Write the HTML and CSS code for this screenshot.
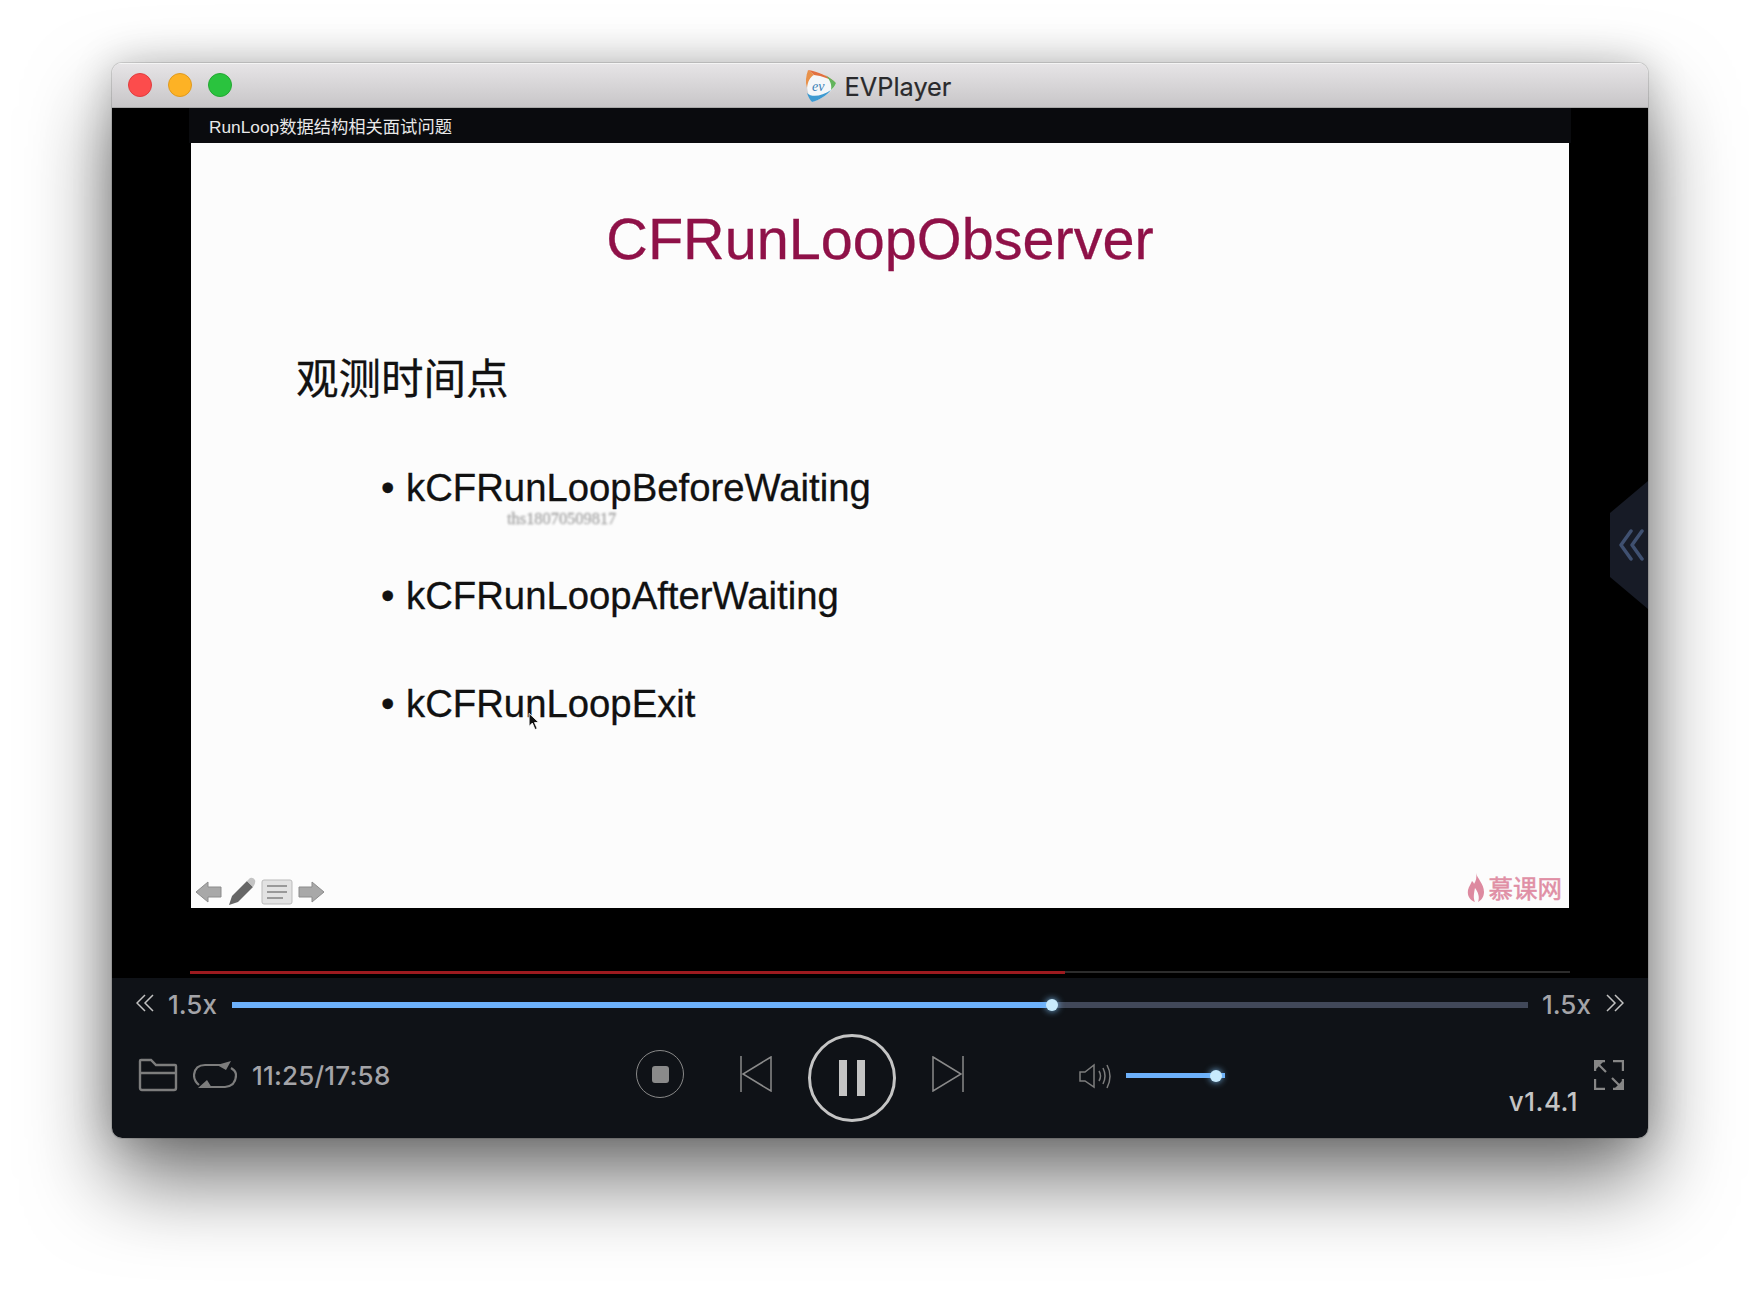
FILE: index.html
```html
<!DOCTYPE html>
<html lang="zh">
<head>
  <meta charset="UTF-8">
  <title>EVPlayer</title>
  <link rel="stylesheet" href="styles.css">
</head>
<body>
  <div class="window">
    <header class="titlebar">
      <div class="lights">
        <span class="light red"></span>
        <span class="light yellow"></span>
        <span class="light green"></span>
      </div>
      <div class="app-name">
        <svg class="app-logo" viewBox="0 0 32 34">
          <path d="M3 1 C11 2 24 7 31 14 C29 21 18 30 7 33 C2 26 0 10 3 1Z" fill="#f4f7f9"/>
          <path d="M3 1 C1 7 0 13 2 19 C3 12 5 8 9 6 C7 4 5 2 3 1Z" fill="#e8914a"/>
          <path d="M3 1 C11 2 24 7 31 14 C26 10 17 7 9 6 C7 4 5 2 3 1Z" fill="#e2703f"/>
          <path d="M20 6 C24 8 28 11 31 14 C30 17 28 19 26 21 C27 16 25 10 20 6Z" fill="#63b45c"/>
          <path d="M2 24 C7 29 17 27 26 21 C21 27 14 31 7 33 C5 31 3 27 2 24Z" fill="#3d9ad1"/>
          <text class="logo-mark" x="7" y="22">ev</text>
        </svg>
        <span>EVPlayer</span>
      </div>
    </header>

    <section class="stage">
      <div class="screen">
        <div class="screen-title">RunLoop数据结构相关面试问题</div>
        <div class="slide">
          <h1 class="slide-heading">CFRunLoopObserver</h1>
          <h2 class="slide-sub">观测时间点</h2>
          <ul class="slide-list">
            <li>kCFRunLoopBeforeWaiting</li>
            <li>kCFRunLoopAfterWaiting</li>
            <li>kCFRunLoopExit</li>
          </ul>
          <span class="watermark">ths18070509817</span>
          <svg class="cursor" viewBox="0 0 12 18">
            <path d="M1 1 L1 13 L4 10 L6.500 16 L8.500 15 L6 9.500 L10 9.500Z" fill="#111" stroke="#fff" stroke-width="0.800"/>
          </svg>
          <div class="slide-tools">
            <svg class="tool" width="28" height="24" viewBox="0 0 28 24">
              <path d="M1 12 L13 2 L13 7 L26 7 L26 17 L13 17 L13 22Z" fill="#a8a8a8" stroke="#8c8c8c"/>
            </svg>
            <svg class="tool" width="30" height="30" viewBox="0 0 30 30">
              <path d="M2 28 L5 19 L20 4 L26 10 L11 25Z" fill="#666"/>
              <path d="M20 4 L23 1 Q26 0 28 3 Q29 6 26 10Z" fill="#c4c4c4"/>
            </svg>
            <svg class="tool" width="32" height="26" viewBox="0 0 32 26">
              <rect x="1" y="1" width="30" height="24" rx="2" fill="#e2e2e2" stroke="#bbb"/>
              <path d="M6 7 H26 M6 13 H26 M6 19 H22" stroke="#999" stroke-width="2"/>
            </svg>
            <svg class="tool" width="28" height="24" viewBox="0 0 28 24">
              <path d="M27 12 L15 2 L15 7 L2 7 L2 17 L15 17 L15 22Z" fill="#a8a8a8" stroke="#8c8c8c"/>
            </svg>
          </div>
          <div class="slide-brand">
            <svg width="18" height="29" viewBox="0 0 18 29">
              <path d="M9 0 C10 5 17 11 17 19 C17 25 13 28 11 29 C13 24 11 19 8 15 C7 20 6 25 8 29 C3 27 0 23 1 17 C2 13 4 11 5 8 C6 9 7 10 7 11 C9 8 10 4 9 0Z" fill="#dd8aa0"/>
            </svg>
            <span>慕课网</span>
          </div>
        </div>
      </div>
      <div class="side-tab">
        <svg width="26" height="32" viewBox="0 0 26 32">
          <path d="M13 2 L3 16 L13 30 M24 2 L14 16 L24 30" fill="none" stroke="#3f5070" stroke-width="3.500" stroke-linecap="round" stroke-linejoin="round"/>
        </svg>
      </div>
      <div class="red-progress"><div class="red-fill"></div></div>
    </section>

    <section class="controls">
      <div class="speed-row">
        <svg class="chev" width="18" height="18" viewBox="0 0 18 18">
          <path d="M9 1 L1 9 L9 17 M17 1 L9 9 L17 17" fill="none" stroke="#c2c2c2" stroke-width="1.500"/>
        </svg>
        <span class="speed-label">1.5x</span>
        <div class="seek">
          <div class="seek-fill"><span class="knob"></span></div>
        </div>
        <span class="speed-label speed-right">1.5x</span>
        <svg class="chev" width="18" height="18" viewBox="0 0 18 18">
          <path d="M1 1 L9 9 L1 17 M9 1 L17 9 L9 17" fill="none" stroke="#c2c2c2" stroke-width="1.500"/>
        </svg>
      </div>

      <div class="button-row">
        <div class="left-group">
          <svg width="40" height="34" viewBox="0 0 40 34">
            <path d="M2 30 V3 Q2 2 3 2 H13 L18 7 H37 Q38 7 38 8 V30 Q38 32 36 32 H4 Q2 32 2 30Z M2 15 H38" fill="none" stroke="#7d7d7d" stroke-width="2.400"/>
          </svg>
          <svg width="44" height="28" viewBox="0 0 44 28">
            <path d="M6 24 Q1 20 1 14 Q2 4 12 4 H28" fill="none" stroke="#7d7d7d" stroke-width="2.200"/>
            <path d="M15 26 H32 Q43 25 43 14 Q43 10 38 7" fill="none" stroke="#7d7d7d" stroke-width="2.200"/>
            <path d="M38 0 L24 4 L33 9Z M5 27 L19 27 L14 19Z" fill="#7d7d7d"/>
          </svg>
          <span class="time">11:25/17:58</span>
        </div>

        <div class="transport">
          <div class="stop-btn"><span class="stop-square"></span></div>
          <svg class="skip-prev" width="32" height="36" viewBox="0 0 32 36">
            <path d="M1 0 V36" stroke="#8a8a8a" stroke-width="1.500"/>
            <path d="M31 1 L3 18 L31 35Z" fill="none" stroke="#8a8a8a" stroke-width="1.500"/>
          </svg>
          <div class="pause-btn"><span class="pause-bar"></span><span class="pause-bar"></span></div>
          <svg class="skip-next" width="32" height="36" viewBox="0 0 32 36">
            <path d="M31 0 V36" stroke="#8a8a8a" stroke-width="1.500"/>
            <path d="M1 1 L29 18 L1 35Z" fill="none" stroke="#8a8a8a" stroke-width="1.500"/>
          </svg>
        </div>

        <div class="volume">
          <svg width="33" height="26" viewBox="0 0 33 26">
            <path d="M1 9 H6 L15 2 V24 L6 18 H1Z" fill="none" stroke="#7d7d7d" stroke-width="1.500"/>
            <path d="M20 8 Q23 13 20 18 M24 5 Q28 13 24 21 M28 2 Q34 13 28 25" fill="none" stroke="#7d7d7d" stroke-width="1.500"/>
          </svg>
          <div class="vol-track"><span class="knob vol-knob"></span></div>
        </div>

        <div class="right-group">
          <span class="version">v1.4.1</span>
          <svg class="fullscreen" width="30" height="30" viewBox="0 0 30 30">
            <path d="M1 11 V1 H11 M19 1 H29 V11 M1 19 V29 H11 M19 29 H29 V19" fill="none" stroke="#868686" stroke-width="2.400"/>
            <path d="M3 3 L12 12 M27 27 L18 18" stroke="#868686" stroke-width="2.200"/>
            <path d="M2 2 H9 L2 9Z M28 28 H21 L28 21Z" fill="#868686"/>
          </svg>
        </div>
      </div>
    </section>
  </div>
</body>
</html>
```

FILE: styles.css
```css
* {
  box-sizing: border-box;
}
body {
  margin: 0;
  padding: 63px 112px 0;
  height: 1298px;
  overflow: hidden;
  background: #fff;
  font-family: 'Inter', 'Noto Sans CJK SC', sans-serif;
}
.window {
  width: 1536px;
  height: 1075px;
  display: flex;
  flex-direction: column;
  border-radius: 10px;
  overflow: hidden;
  box-shadow: 0 0 0 1px rgba(0,0,0,0.12), 0 42px 84px rgba(0,0,0,0.55), 0 0 40px rgba(0,0,0,0.2);
}

/* title bar */
.titlebar {
  height: 45px;
  flex: none;
  position: relative;
  display: flex;
  align-items: center;
  justify-content: center;
  background: linear-gradient(#e6e4e6, #c8c6c8);
  border-top: 1px solid #f4f4f4;
  border-bottom: 1px solid #a8a8a8;
}
.lights {
  position: absolute;
  left: 16px;
  top: 9px;
  display: flex;
  gap: 16px;
}
.light {
  width: 24px;
  height: 24px;
  border-radius: 50%;
}
.red { background: #fc4c4c; border: 1px solid #df3d3f; }
.yellow { background: #fdb225; border: 1px solid #df9a1f; }
.green { background: #2ac33e; border: 1px solid #24a732; }
.app-name {
  display: flex;
  align-items: center;
  gap: 8px;
  padding: 2px 4px 0 0;
  font-size: 25.300px;
  color: #2a2a2c;
  -webkit-text-stroke: 0.200px #2a2a2c;
}
.app-logo {
  width: 32px;
  height: 34px;
  margin-top: -2px;
  -webkit-text-stroke: 0;
}
.logo-mark {
  font-family: 'Liberation Serif', serif;
  font-style: italic;
  font-size: 14px;
  fill: #3a7fb5;
}

/* video area */
.stage {
  flex: 1;
  position: relative;
  background: #000;
  padding: 0 77px;
}
.screen-title {
  height: 35px;
  padding-left: 20px;
  display: flex;
  align-items: center;
  background: #0a0b0e;
  color: #e8e8e8;
  font-family: 'Liberation Sans', 'Noto Sans CJK SC', sans-serif;
  font-size: 17.300px;
}
.slide {
  position: relative;
  height: 765px;
  margin: 0 2px;
  background: #fcfcfc;
  color: #111;
  font-family: 'Liberation Sans', 'Noto Sans CJK SC', sans-serif;
  -webkit-text-stroke: 0.300px currentColor;
}
.slide-heading {
  margin: 0;
  padding-top: 58px;
  text-align: center;
  font-size: 57.600px;
  line-height: 76px;
  font-weight: normal;
  color: #8f1148;
}
.slide-sub {
  margin: 73px 0 0 105px;
  font-size: 42.500px;
  line-height: 60px;
  font-weight: normal;
}
.slide-list {
  margin: 53px 0 0;
  padding: 0 0 0 190px;
  list-style: none;
  font-size: 38.300px;
  line-height: 50px;
}
.slide-list li {
  display: flex;
  margin-bottom: 58px;
}
.slide-list li::before {
  content: "•";
  width: 25px;
}
.watermark {
  position: absolute;
  left: 316px;
  top: 366px;
  font-family: 'Liberation Serif', serif;
  font-size: 16.400px;
  color: #a4a4a4;
  filter: blur(0.8px);
}
.cursor {
  position: absolute;
  left: 337px;
  top: 569px;
  width: 13px;
  height: 20px;
}
.slide-tools {
  position: absolute;
  left: 4px;
  bottom: 1px;
  display: flex;
  align-items: center;
  gap: 4px;
}
.slide-brand {
  position: absolute;
  right: 7px;
  bottom: 3px;
  display: flex;
  align-items: center;
  gap: 4px;
  color: #e08fa5;
  font-size: 24.500px;
  font-weight: normal;
  -webkit-text-stroke: 0.500px #e08fa5;
}
.side-tab {
  position: absolute;
  right: 0;
  top: 373px;
  width: 38px;
  height: 128px;
  display: flex;
  align-items: center;
  justify-content: center;
  padding-left: 4px;
  background: #171b26;
  clip-path: polygon(100% 0, 100% 100%, 0 75%, 0 25%);
}
.red-progress {
  position: absolute;
  left: 78px;
  right: 78px;
  bottom: 5px;
  height: 2px;
  background: #2c2c2c;
}
.red-fill {
  width: 63.400%;
  height: 3px;
  background: #9c1a1f;
}

/* controls */
.controls {
  flex: none;
  height: 160px;
  background: #0f1217;
  padding: 16px 24px 0;
}
.speed-row {
  display: flex;
  align-items: center;
  gap: 14px;
  height: 22px;
}
.chev {
  margin-bottom: 4px;
}
.speed-label {
  width: 48px;
  margin-bottom: 2px;
  font-size: 26px;
  font-weight: 500;
  white-space: nowrap;
  color: #a4a4a8;
}
.speed-right {
  margin-left: -2px;
  margin-right: 2px;
}
.seek {
  flex: 1;
  height: 6px;
  margin: 0 2px;
  background: #414859;
}
.seek-fill {
  position: relative;
  width: 63.300%;
  height: 100%;
  background: #6db1fb;
}
.knob {
  position: absolute;
  right: -6px;
  top: -3px;
  width: 12px;
  height: 12px;
  border-radius: 50%;
  background: #c8eafc;
  box-shadow: 0 0 7px #7fc0f5;
}
.button-row {
  display: flex;
  align-items: center;
  height: 88px;
  margin-top: 18px;
}
.left-group {
  display: flex;
  align-items: center;
  gap: 15px;
  width: 500px;
  padding: 0 0 6px 2px;
}
.time {
  font-size: 26px;
  font-weight: 500;
  letter-spacing: 0.200px;
  color: #a4a4a8;
}
.transport {
  display: flex;
  align-items: center;
}
.stop-btn {
  width: 48px;
  height: 48px;
  margin-bottom: 8px;
  border: 1px solid #888;
  border-radius: 50%;
  display: flex;
  align-items: center;
  justify-content: center;
}
.stop-square {
  width: 17px;
  height: 17px;
  border-radius: 3px;
  background: #8a8a8a;
}
.skip-prev {
  margin: 0 35px 8px 56px;
}
.pause-btn {
  width: 88px;
  height: 88px;
  margin-left: 1px;
  border: 3px solid #c4c4c4;
  border-radius: 50%;
  display: flex;
  align-items: center;
  justify-content: center;
  gap: 10px;
}
.pause-bar {
  width: 8px;
  height: 36px;
  background: #c4c4c4;
}
.skip-next {
  margin: 0 0 8px 36px;
}
.volume {
  display: flex;
  align-items: center;
  gap: 14px;
  margin-left: 115px;
  padding-bottom: 5px;
}
.vol-track {
  position: relative;
  width: 99px;
  height: 5px;
  background: #6db1fb;
}
.vol-knob {
  right: 3px;
  top: -3px;
}
.right-group {
  flex: 1;
  display: flex;
  align-items: center;
  justify-content: flex-end;
  gap: 16px;
  padding-bottom: 6px;
}
.version {
  font-size: 26px;
  font-weight: 500;
  letter-spacing: 0.500px;
  color: #c4c4c4;
  transform: translateY(26px);
}
```
